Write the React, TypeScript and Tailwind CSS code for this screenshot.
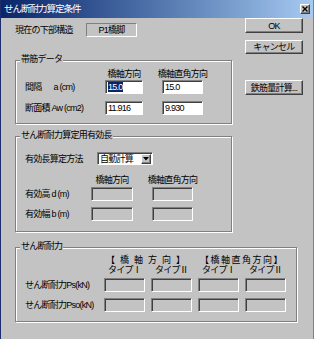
const sunken =
  "border border-t-[#808080] border-l-[#808080] border-r-white border-b-white shadow-[inset_1px_1px_0_#404040]";
const raised =
  "border border-t-white border-l-white border-r-[#404040] border-b-[#404040] shadow-[inset_-1px_-1px_0_#808080]";

export default function App() {
  return (
    <div className="w-[314px] h-[339px] overflow-hidden bg-[#c3c3c3] border-l border-l-[#1c2c6c] border-r border-r-[#808080] text-[9px] leading-[10px] tracking-[-0.75px] text-black font-['Liberation_Sans','Noto_Sans_CJK_JP',sans-serif]">
      {/* title bar */}
      <div className="h-[18px] flex items-center justify-between pl-[3px] pr-[3px] bg-gradient-to-r from-[#0a246a] to-[#a6caf0]">
        <span className="text-white text-[9.5px] tracking-[-1px]">せん断耐力算定条件</span>
        <div className={`w-[10px] h-[10px] bg-[#c3c3c3] flex items-center justify-center ${raised}`}>
          <svg width="6" height="6" viewBox="0 0 6 6">
            <path d="M0.5 0.5 L5.5 5.5 M5.5 0.5 L0.5 5.5" stroke="#000" strokeWidth="1.4" />
          </svg>
        </div>
      </div>

      {/* body */}
      <div className="pl-[14px]">
        <div className="flex">
          {/* left column */}
          <div className="w-[217px]">
            <div className="mt-[5px] flex items-center h-[14px]">
              <div className="w-[71px]">現在の下部構造</div>
              <div className="w-[51px] h-[14px] flex items-center justify-center border border-t-[#808080] border-l-[#808080] border-r-white border-b-white">
                P1橋脚
              </div>
            </div>

            <Group title="帯筋データ" className="mt-[23px] h-[64px] pl-[9px] pt-[8px]">
              <div className="flex h-[10px]">
                <div className="w-[80px]" />
                <div className="w-[38px] flex justify-center whitespace-nowrap">橋軸方向</div>
                <div className="ml-[19px] w-[41px] flex justify-center whitespace-nowrap">橋軸直角方向</div>
              </div>
              <div className="mt-[1px] flex items-center h-[14px]">
                <div className="w-[80px] whitespace-nowrap">
                  間隔<span className="ml-[12px]">a (cm)</span>
                </div>
                <Field className="w-[38px] bg-white">
                  <span className="bg-[#0a246a] text-white">15.0</span>
                </Field>
                <Field className="ml-[19px] w-[41px] bg-white">15.0</Field>
              </div>
              <div className="mt-[7px] flex items-center h-[14px]">
                <div className="w-[80px] whitespace-nowrap">断面積 Aw (cm2)</div>
                <Field className="w-[38px] bg-white">11.916</Field>
                <Field className="ml-[19px] w-[41px] bg-white">9.930</Field>
              </div>
            </Group>

            <Group title="せん断耐力算定用有効長" className="mt-[12px] h-[96px] pl-[9px] pt-[15px]">
              <div className="flex items-center h-[13px]">
                <div className="w-[72px] whitespace-nowrap">有効長算定方法</div>
                <div className={`w-[56px] h-[13px] flex items-center bg-white ${sunken}`}>
                  <span className="flex-1 pl-[2px]">自動計算</span>
                  <div className={`w-[10px] h-[10px] mr-[1px] bg-[#c3c3c3] flex items-center justify-center ${raised}`}>
                    <svg width="6" height="4" viewBox="0 0 6 4">
                      <path d="M0 0 H6 L3 3.5 Z" fill="#000" />
                    </svg>
                  </div>
                </div>
              </div>
              <div className="mt-[10px] flex h-[10px]">
                <div className="w-[66px]" />
                <div className="w-[42px] flex justify-center whitespace-nowrap">橋軸方向</div>
                <div className="ml-[19px] w-[41px] flex justify-center whitespace-nowrap">橋軸直角方向</div>
              </div>
              <div className="mt-[2px] flex items-center h-[14px]">
                <div className="w-[66px] whitespace-nowrap">有効高 d (m)</div>
                <Field className="w-[42px]" />
                <Field className="ml-[19px] w-[41px]" />
              </div>
              <div className="mt-[6px] flex items-center h-[14px]">
                <div className="w-[66px] whitespace-nowrap">有効幅 b (m)</div>
                <Field className="w-[42px]" />
                <Field className="ml-[19px] w-[41px]" />
              </div>
            </Group>
          </div>

          {/* right column */}
          <div className="ml-[13px] w-[58px] flex flex-col">
            <Button className="h-[15px]">OK</Button>
            <Button className="mt-[7px] h-[14px]">キャンセル</Button>
            <Button className="mt-[26px] h-[15px]">鉄筋量計算...</Button>
          </div>
        </div>

        <Group title="せん断耐力" className="mt-[15px] w-[282px] h-[75px] pl-[9px] pt-[7px]">
          <div className="flex h-[10px]">
            <div className="w-[79px]" />
            <div className="w-[88px] flex justify-center whitespace-nowrap tracking-[5px]">【橋軸方向】</div>
            <div className="ml-[6px] w-[88px] flex justify-center whitespace-nowrap tracking-[1.5px]">【橋軸直角方向】</div>
          </div>
          <div className="flex h-[10px] gap-[6px]">
            <div className="w-[73px]" />
            <div className="w-[41px] flex justify-center">タイプⅠ</div>
            <div className="w-[41px] flex justify-center">タイプⅡ</div>
            <div className="w-[41px] flex justify-center">タイプⅠ</div>
            <div className="w-[41px] flex justify-center">タイプⅡ</div>
          </div>
          <div className="mt-[3px] flex items-center h-[14px] gap-[6px]">
            <div className="w-[73px] whitespace-nowrap">せん断耐力Ps(kN)</div>
            <Field className="w-[41px]" />
            <Field className="w-[41px]" />
            <Field className="w-[41px]" />
            <Field className="w-[41px]" />
          </div>
          <div className="mt-[6px] flex items-center h-[14px] gap-[6px]">
            <div className="w-[73px] whitespace-nowrap">せん断耐力Pso(kN)</div>
            <Field className="w-[41px]" />
            <Field className="w-[41px]" />
            <Field className="w-[41px]" />
            <Field className="w-[41px]" />
          </div>
        </Group>
      </div>
    </div>
  );
}

function Group({ title, className, children }: any) {
  return (
    <div className={`relative border border-[#808080] shadow-[inset_1px_1px_0_#fff,1px_1px_0_#fff] ${className}`}>
      <span className="absolute -top-[7px] left-[4px] px-[1px] bg-[#c3c3c3] whitespace-nowrap">{title}</span>
      {children}
    </div>
  );
}

function Field({ className, children }: any) {
  return (
    <div className={`h-[14px] flex items-center pl-[2px] whitespace-nowrap ${sunken} ${className}`}>
      {children}
    </div>
  );
}

function Button({ className, children }: any) {
  return (
    <div className={`flex items-center justify-center whitespace-nowrap ${raised} ${className}`}>
      {children}
    </div>
  );
}
